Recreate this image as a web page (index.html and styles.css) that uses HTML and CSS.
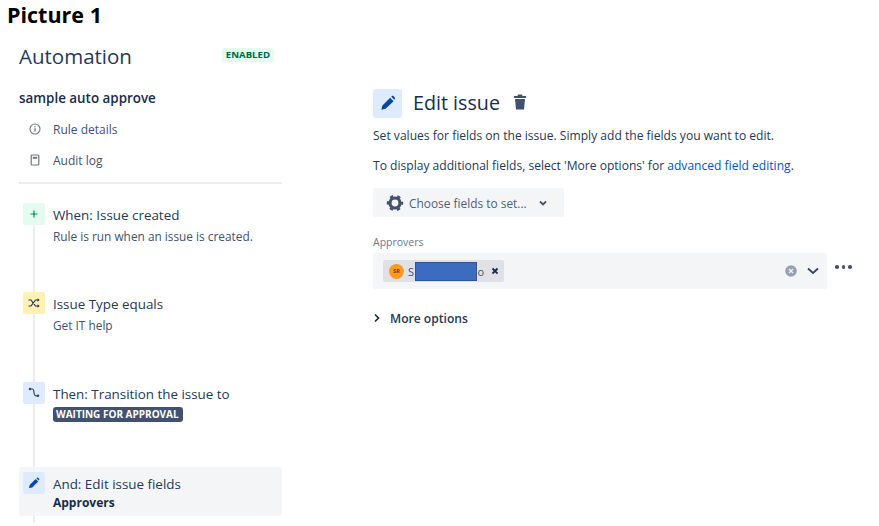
FILE: index.html
```html
<!DOCTYPE html>
<html lang="en">
<head>
<meta charset="utf-8">
<title>Picture 1</title>
<link rel="stylesheet" href="styles.css">
</head>
<body>
<h1 class="caption">Picture 1</h1>
<div class="main">
  <aside class="sidebar">
    <div class="side-head">
      <h2 class="side-title">Automation</h2>
      <span class="lozenge">ENABLED</span>
    </div>
    <div class="rule-name">sample auto approve</div>
    <nav class="side-nav">
      <a class="nav-item">
        <svg class="nav-icon" viewBox="0 0 12 12" width="12" height="12"><circle cx="6" cy="6" r="5" fill="none" stroke="#6b778c" stroke-width="1.1"/><rect x="5.4" y="5.2" width="1.2" height="3.4" fill="#6b778c"/><rect x="5.4" y="3.1" width="1.2" height="1.2" fill="#6b778c"/></svg>
        <span>Rule details</span>
      </a>
      <a class="nav-item">
        <svg class="nav-icon" viewBox="0 0 12 12" width="12" height="12"><rect x="2.2" y="1" width="7.6" height="10" rx="1" fill="none" stroke="#6b778c" stroke-width="1.2"/><rect x="3.8" y="2.8" width="4.4" height="2" fill="#6b778c"/></svg>
        <span>Audit log</span>
      </a>
    </nav>
    <div class="timeline">
      <div class="step step-when">
        <span class="badge badge-green"><svg viewBox="0 0 10 10" width="10" height="10"><path d="M5 1.5v7M1.5 5h7" stroke="#00875a" stroke-width="1.2" fill="none"/></svg></span>
        <div class="step-text">
          <div class="step-title">When: Issue created</div>
          <div class="step-sub">Rule is run when an issue is created.</div>
        </div>
      </div>
      <div class="step step-cond">
        <span class="badge badge-yellow"><svg viewBox="0 0 12 10" width="12" height="10"><path d="M0.5 2h2.500l4.500 6h3M0.5 8h2.500l4.500-6h3" stroke="#253858" stroke-width="1.2" fill="none"/><path d="M9.500 0.3l2.200 1.700-2.200 1.700zM9.500 6.300l2.200 1.700-2.200 1.700z" fill="#253858"/></svg></span>
        <div class="step-text">
          <div class="step-title">Issue Type equals</div>
          <div class="step-sub">Get IT help</div>
        </div>
      </div>
      <div class="step step-then">
        <span class="badge badge-blue"><svg viewBox="0 0 12 12" width="12" height="12"><path d="M2 2h2.200c1 0 1.300.6 1.500 1.600l.6 3.600c.2 1 .6 1.600 1.600 1.600H10" stroke="#2a4a80" stroke-width="1.2" fill="none"/><circle cx="2" cy="2" r="1.300" fill="#2a4a80"/><circle cx="10" cy="8.800" r="1.300" fill="#2a4a80"/></svg></span>
        <div class="step-text">
          <div class="step-title">Then: Transition the issue to</div>
          <span class="status">WAITING FOR APPROVAL</span>
        </div>
      </div>
      <div class="step step-active">
        <span class="badge badge-blue"><svg viewBox="0 0 12 12" width="12" height="12"><path d="M1 11l.7-3L7.600 2l2.600 2.600-6 5.800zM8.400 1.200l.5-.4c.4-.3.9-.3 1.200 0l1 1c.3.3.3.8 0 1.200l-.5.5z" fill="#0747a6"/></svg></span>
        <div class="step-text">
          <div class="step-title">And: Edit issue fields</div>
          <div class="step-strong">Approvers</div>
        </div>
      </div>
    </div>
  </aside>
  <section class="content">
    <div class="content-head">
      <span class="head-badge"><svg viewBox="0 0 12 12" width="16" height="16"><path d="M1 11l.7-3L7.600 2l2.600 2.600-6 5.800zM8.400 1.200l.5-.4c.4-.3.9-.3 1.200 0l1 1c.3.3.3.8 0 1.200l-.5.5z" fill="#0747a6"/></svg></span>
      <h2 class="content-title">Edit issue</h2>
      <svg class="trash" viewBox="0 0 14 16" width="14" height="16"><path d="M5 0.500h4l.5 1.500H13v2H1V2h3.500zM2 5h10l-1 10.500H3z" fill="#42526e"/></svg>
    </div>
    <p class="para para-first">Set values for fields on the issue. Simply add the fields you want to edit.</p>
    <p class="para">To display additional fields, select 'More options' for <a class="link">advanced field editing</a>.</p>
    <div class="choose">
      <svg viewBox="0 0 18 18" width="18" height="18"><circle cx="9" cy="9" r="5" fill="none" stroke="#42526e" stroke-width="3.200"/><circle cx="9" cy="9" r="7" fill="none" stroke="#42526e" stroke-width="2.400" stroke-dasharray="3.300 4.030" stroke-dashoffset="1.650"/></svg>
      <span>Choose fields to set...</span>
      <svg class="choose-chev" viewBox="0 0 10 10" width="10" height="10"><path d="M2 3.500l3 3 3-3" fill="none" stroke="#42526e" stroke-width="1.800"/></svg>
    </div>
    <label class="field-label">Approvers</label>
    <div class="field-row">
      <div class="select">
        <span class="tag">
          <span class="avatar">SR</span>
          <span class="tag-name">S<span class="redact"></span>o</span>
          <svg class="tag-x" viewBox="0 0 8 8" width="8" height="8"><path d="M1.500 1.500l5 5M6.500 1.500l-5 5" stroke="#172b4d" stroke-width="1.800"/></svg>
        </span>
        <span class="select-actions">
          <svg viewBox="0 0 12 12" width="12" height="12"><circle cx="6" cy="6" r="5.800" fill="#97a0af"/><path d="M4 4l4 4M8 4l-4 4" stroke="#f1f2f5" stroke-width="1.300"/></svg>
          <svg viewBox="0 0 14 10" width="14" height="10"><path d="M2 2.500l5 4.500 5-4.500" fill="none" stroke="#344563" stroke-width="1.800"/></svg>
        </span>
      </div>
      <span class="more-dots"><i></i><i></i><i></i></span>
    </div>
    <div class="more-options">
      <svg viewBox="0 0 8 10" width="8" height="10"><path d="M2 1.500l3.500 3.500-3.500 3.500" fill="none" stroke="#172b4d" stroke-width="1.700"/></svg>
      <span>More options</span>
    </div>
  </section>
</div>
</body>
</html>
```
FILE: styles.css
```css
* { box-sizing: border-box; }
html, body { margin: 0; padding: 0; }
body {
  width: 879px;
  height: 526px;
  overflow: hidden;
  background: #fff;
  font-family: "Open Sans", "Noto Sans", sans-serif;
  color: #172b4d;
}
.caption {
  margin: 0;
  padding: 0 0 0 7px;
  height: 26px;
  font-size: 21.500px;
  line-height: 30px;
  font-weight: 700;
  color: #000;
}
.main { display: flex; align-items: flex-start; }
.sidebar { width: 263px; margin-left: 19px; }
.side-head {
  display: flex;
  align-items: center;
  justify-content: space-between;
  padding-top: 16px;
  height: 44px;
  padding-right: 8px;
}
.side-title { margin: 0; font-size: 20.500px; font-weight: 400; line-height: 28px; color: #253858; }
.lozenge {
  font-size: 9.600px;
  font-weight: 700;
  line-height: 14px;
  padding: 0 4px;
  margin-top: -2px;
  color: #006644;
  background: #e3fcef;
  border-radius: 3px;
}
.rule-name { margin-top: 18px; font-size: 13.400px; font-weight: 600; line-height: 20px; }
.side-nav { display: flex; flex-direction: column; padding-bottom: 12px; border-bottom: 2px solid #ebecf0; margin-top: 11px; gap: 11px; }
.nav-item { display: flex; align-items: center; gap: 12px; padding-left: 10px; height: 20px; font-size: 12px; color: #42526e; }
.nav-icon { flex: none; }
.timeline { position: relative; padding-top: 19px; height: 340px; }
.timeline::before {
  content: "";
  position: absolute;
  left: 14px;
  top: 40px;
  width: 2px;
  height: 299px;
  background: #ebecf0;
}
.step { position: relative; display: flex; gap: 8px; padding-left: 4px; }
.step-when { height: 89px; }
.step-cond { height: 90px; }
.step-then { height: 85px; }
.step-active { height: 49px; background: #f4f5f7; border-radius: 3px; padding-top: 5px; width: 263px; }
.badge {
  flex: none;
  width: 22px;
  height: 22px;
  display: flex;
  align-items: center;
  justify-content: center;
  border-radius: 2px;
}
.badge-green { background: #e3fcef; }
.badge-yellow { background: #fff0b3; }
.badge-blue { background: #deebff; }
.step-text { padding-top: 2px; }
.step-title { font-size: 13.400px; line-height: 20px; color: #253858; }
.step-sub { font-size: 11.850px; line-height: 22px; color: #42526e; }
.step-strong { font-size: 12px; line-height: 18px; font-weight: 700; color: #172b4d; }
.status {
  display: block;
  width: 130px;
  margin-top: 3px;
  background: #42526e;
  color: #fff;
  font-size: 10px;
  font-weight: 700;
  line-height: 15px;
  padding: 0 3px;
  border-radius: 3px;
  white-space: nowrap;
}
.content { width: 454px; margin-left: 91px; padding-top: 62px; }
.content-head { display: flex; align-items: center; height: 30px; }
.head-badge {
  width: 29px;
  height: 29px;
  display: flex;
  align-items: center;
  justify-content: center;
  background: #deebff;
  border-radius: 3px;
}
.content-title { margin: 0 0 0 11px; font-size: 19.700px; font-weight: 400; line-height: 30px; color: #172b4d; }
.trash { margin-left: 13px; margin-top: -2px; }
.para { margin: 0; font-size: 12.080px; line-height: 20px; color: #253858; width: 460px; white-space: nowrap; }
.para-first { margin-top: 8px; margin-bottom: 10px; }
.link { color: #0052cc; }
.choose {
  display: flex;
  align-items: center;
  width: 191px;
  height: 29px;
  margin-top: 12px;
  padding-left: 13px;
  background: #f4f5f7;
  border-radius: 3px;
  font-size: 11.900px;
  color: #505f79;
}
.choose span { margin-left: 5px; }
.choose-chev { margin-left: 11px; }
.field-label { display: block; margin-top: 18px; font-size: 10.500px; line-height: 14px; font-weight: 400; color: #6b778c; }
.field-row { display: flex; align-items: flex-start; margin-top: 4px; position: relative; width: 500px; }
.select {
  width: 454px;
  height: 36px;
  display: flex;
  align-items: center;
  justify-content: space-between;
  padding: 0 7px 0 10px;
  background: #f4f5f7;
  border-radius: 3px;
}
.tag {
  display: flex;
  align-items: center;
  height: 22px;
  width: 121px;
  padding-left: 6px;
  background: #dfe1e6;
  border-radius: 2px;
  font-size: 11px;
  color: #42526e;
}
.avatar {
  width: 15px;
  height: 15px;
  border-radius: 50%;
  background: #ff991f;
  color: #7a3b00;
  font-size: 5.500px;
  font-weight: 700;
  display: flex;
  align-items: center;
  justify-content: center;
}
.tag-name { display: flex; align-items: center; margin-left: 4px; width: 76px; }
.redact { width: 64px; height: 19px; margin-left: 1px; background: #3b6cc0; border: 1px solid #2f5597; }
.tag-x { margin-left: 7px; }
.select-actions { display: flex; align-items: center; gap: 9px; }
.more-dots { display: flex; gap: 3px; margin: 12px 0 0 8px; }
.more-dots i { width: 3.500px; height: 3.500px; border-radius: 50%; background: #42526e; }
.more-options {
  display: flex;
  align-items: center;
  gap: 9px;
  margin-top: 19px;
  height: 20px;
  font-size: 12.100px;
  font-weight: 600;
  color: #253858;
}
```
